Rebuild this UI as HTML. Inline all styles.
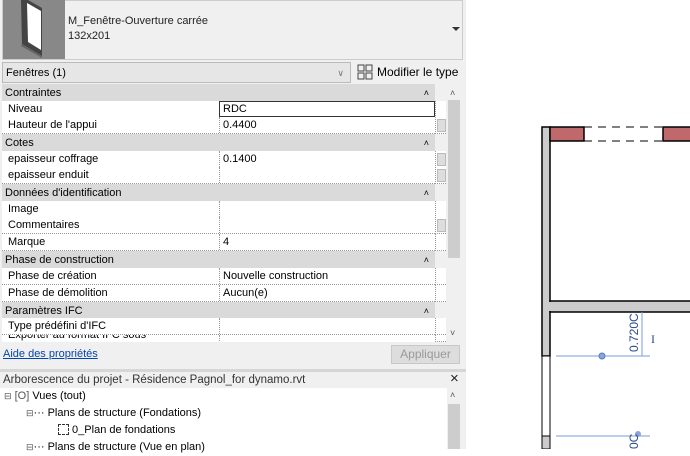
<!DOCTYPE html><html><head><meta charset="utf-8"><style>
*{margin:0;padding:0;box-sizing:border-box}
body{width:690px;height:449px;overflow:hidden;background:#fff;font-family:"Liberation Sans",sans-serif;font-size:11px;color:#000;position:relative}
.a{position:absolute}
.panel{left:0;top:0;width:466px;height:449px;background:#f0f0f0}
.hdr{left:2px;width:433px;height:17px;background:#dadada;padding-left:3px;line-height:18px}
.hdr span{position:absolute;right:6px;top:0;font-size:9px}
.row{left:2px;width:433px;height:17px;background:#fff;border-bottom:1px dotted #999;line-height:17px}
.row .k{position:absolute;left:6px}
.row .v{position:absolute;left:217px;top:0;height:16px;border-left:1px dotted #999;padding-left:3px;width:216px}
.sc{left:435px;width:11px;height:17px;background:#fff;border-left:1px dotted #999;border-bottom:1px dotted #999}
.sc i{position:absolute;left:1px;top:2px;width:9px;height:13px;background:#ddd;border:1px solid #bbb}
.tr{line-height:17px}
</style></head><body>
<div class="a panel"></div>
<div class="a" style="left:2px;top:0;width:461px;height:60px;background:#f0f0f0;border:1px solid #ccc"></div>
<svg class="a" style="left:3px;top:0" width="62" height="59"><rect width="62" height="59" fill="#888"/>
<polygon points="18,0 25,0 39,8 39,56 19,44" fill="#444"/>
<polygon points="24,3 38,11 38,50 25,42" fill="#fff"/>
<polygon points="19,44 39,56 39,58 18,46" fill="#666"/></svg>
<div class="a" style="left:68px;top:14px;font-size:11px;line-height:15px;color:#222">M_Fenêtre-Ouverture carrée<br>132x201</div>
<div class="a" style="left:452px;top:27px;width:0;height:0;border-left:4px solid transparent;border-right:4px solid transparent;border-top:4px solid #333"></div>
<div class="a" style="left:2px;top:62px;width:349px;height:21px;background:#e6e6e6;border:1px solid #bbb;line-height:20px;padding-left:3px">Fenêtres (1)<span style="position:absolute;right:6px;color:#777;font-size:9px">&#8744;</span></div>
<svg class="a" style="left:357px;top:64px" width="16" height="16"><rect x="1" y="1" width="6" height="6" fill="none" stroke="#444"/><rect x="1" y="9" width="6" height="6" fill="none" stroke="#444"/><rect x="9" y="1" width="6" height="6" fill="none" stroke="#444"/><rect x="9" y="9" width="6" height="6" fill="none" stroke="#444"/></svg>
<div class="a" style="left:377px;top:65px;font-size:12px">Modifier le type</div>
<div class="a hdr" style="top:84px">Contraintes<span>&#708;</span></div>
<div class="a row" style="top:101px"><span class="k">Niveau</span><span class="v" style="border:1px solid #333;background:#fff;height:16px;line-height:15px">RDC</span></div>
<div class="a row" style="top:117px"><span class="k">Hauteur de l'appui</span><span class="v">0.4400</span></div>
<div class="a hdr" style="top:134px">Cotes<span>&#708;</span></div>
<div class="a row" style="top:151px"><span class="k">epaisseur coffrage</span><span class="v">0.1400</span></div>
<div class="a row" style="top:167px"><span class="k">epaisseur enduit</span><span class="v"></span></div>
<div class="a hdr" style="top:184px">Données d'identification<span>&#708;</span></div>
<div class="a row" style="top:201px"><span class="k">Image</span><span class="v"></span></div>
<div class="a row" style="top:217px"><span class="k">Commentaires</span><span class="v"></span></div>
<div class="a row" style="top:234px"><span class="k">Marque</span><span class="v">4</span></div>
<div class="a hdr" style="top:251px">Phase de construction<span>&#708;</span></div>
<div class="a row" style="top:268px"><span class="k">Phase de création</span><span class="v">Nouvelle construction</span></div>
<div class="a row" style="top:285px"><span class="k">Phase de démolition</span><span class="v">Aucun(e)</span></div>
<div class="a hdr" style="top:302px">Paramètres IFC<span>&#708;</span></div>
<div class="a row" style="top:318px"><span class="k">Type prédéfini d'IFC</span><span class="v"></span></div>
<div class="a row" style="top:335px;height:7px;overflow:hidden;border:none"><span class="k" style="top:-8px">Exporter au format IFC sous</span><span class="v"></span></div>
<div class="a sc" style="top:101px"></div><div class="a sc" style="top:117px"><i></i></div>
<div class="a sc" style="top:151px"><i></i></div><div class="a sc" style="top:167px"><i></i></div>
<div class="a sc" style="top:201px"></div><div class="a sc" style="top:217px"><i></i></div><div class="a sc" style="top:234px"></div>
<div class="a sc" style="top:268px"></div><div class="a sc" style="top:285px"></div>
<div class="a sc" style="top:318px"></div><div class="a sc" style="top:335px;height:7px"></div>
<div class="a" style="left:447px;top:84px;width:14px;height:258px;background:#f0f0f0"></div>
<div class="a" style="left:448px;top:100px;width:12px;height:158px;background:#cdcdcd"></div>
<div class="a" style="left:450px;top:88px;font-size:9px;color:#555">&#708;</div>
<div class="a" style="left:450px;top:328px;font-size:9px;color:#555">&#709;</div>
<div class="a" style="left:3px;top:348px;color:#0645ad;text-decoration:underline">Aide des propriétés</div>
<div class="a" style="left:391px;top:345px;width:69px;height:19px;background:#ddd;border:1px solid #c8c8c8;color:#999;text-align:center;line-height:17px;font-size:12px">Appliquer</div>
<div class="a" style="left:0;top:369px;width:466px;height:3px;background:#d6d6d6"></div>
<div class="a" style="left:3px;top:374px;color:#333;font-size:11.5px">Arborescence du projet - Résidence Pagnol_for dynamo.rvt</div>
<div class="a" style="left:450px;top:370px;font-size:15px;color:#222">×</div>
<div class="a" style="left:0;top:388px;width:447px;height:61px;background:#fff"></div>
<div class="a" style="left:447px;top:388px;width:14px;height:61px;background:#f0f0f0"></div>
<div class="a" style="left:448px;top:404px;width:12px;height:45px;background:#cdcdcd"></div>
<div class="a" style="left:450px;top:390px;font-size:9px;color:#555">&#708;</div>
<div class="a tr" style="left:4px;top:388px"><span style="font-size:9px;color:#555">&#8863;</span> <span style="color:#555">[O]</span> Vues (tout)</div>
<div class="a tr" style="left:26px;top:405px"><span style="font-size:9px;color:#555">&#8863;</span>··· Plans de structure (Fondations)</div>
<div class="a tr" style="left:58px;top:422px"><span style="display:inline-block;width:11px;height:11px;border:1px dashed #333;vertical-align:-2px"></span> 0_Plan de fondations</div>
<div class="a tr" style="left:26px;top:439px"><span style="font-size:9px;color:#555">&#8863;</span>··· Plans de structure (Vue en plan)</div>
<svg class="a" style="left:466px;top:0" width="224" height="449">
<rect x="0" y="0" width="224" height="449" fill="#fff"/>
<rect x="76" y="127" width="8" height="229" fill="#ccc" stroke="#000" stroke-width="1.5"/>
<rect x="76" y="356" width="8" height="80" fill="#fff" stroke="#000" stroke-width="1"/>
<rect x="76" y="436" width="8" height="13" fill="#ccc" stroke="#000"/>
<rect x="84" y="127" width="34" height="14" fill="#c0696c" stroke="#000" stroke-width="1.5"/>
<rect x="197" y="127" width="30" height="14" fill="#c0696c" stroke="#000" stroke-width="1.5"/>
<line x1="118" y1="127" x2="197" y2="127" stroke="#000" stroke-dasharray="8,6"/>
<line x1="118" y1="141" x2="197" y2="141" stroke="#000" stroke-dasharray="8,6"/>
<rect x="84" y="301" width="142" height="11" fill="#ccc" stroke="#000" stroke-width="1.5"/>
<rect x="77" y="302" width="8" height="9" fill="#ccc"/>
<line x1="90" y1="356" x2="184" y2="356" stroke="#7a9dd8"/>
<circle cx="136" cy="356" r="3" fill="#8aa6d8" stroke="#5a7ab8"/>
<line x1="176" y1="312" x2="176" y2="356" stroke="#7a9dd8"/>
<text x="0" y="0" transform="translate(172,352) rotate(-90)" fill="#2a4a8a" font-size="12" font-family="Liberation Sans">0.720C</text>
<text x="185" y="343" fill="#2a4a8a" font-size="12" font-family="Liberation Serif">I</text>
<line x1="90" y1="436" x2="184" y2="436" stroke="#7a9dd8"/>
<circle cx="172" cy="434" r="3" fill="#8aa6d8"/>
<text x="0" y="0" transform="translate(172,449) rotate(-90)" fill="#2a4a8a" font-size="12" font-family="Liberation Sans">0C</text>
</svg>
</body></html>
